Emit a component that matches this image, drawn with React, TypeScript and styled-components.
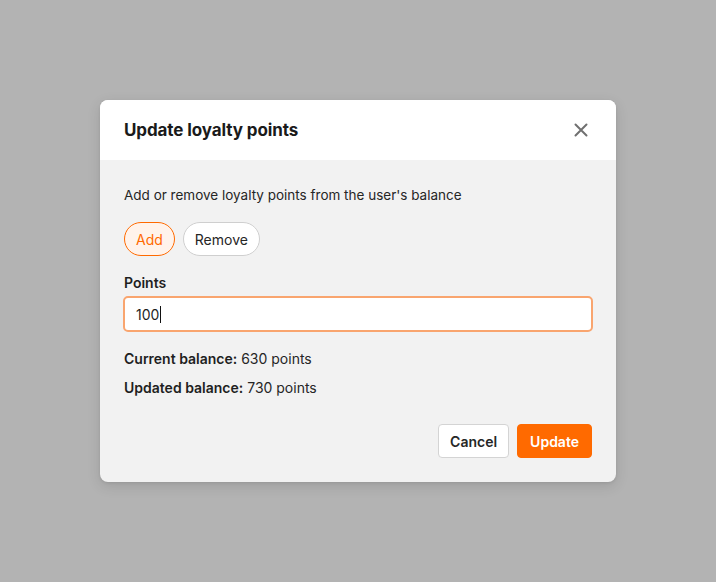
import styled, { createGlobalStyle } from "styled-components"

const GlobalStyle = createGlobalStyle`
html, body {
    margin: 0;
    padding: 0;
    background: #b3b3b3;
    font-family: Inter, "Noto Sans", "Liberation Sans", sans-serif;
    color: #1f1f1f;
}
* {
    box-sizing: border-box;
}
`

const Overlay = styled.div`
min-height: 100vh;
display: flex;
align-items: center;
justify-content: center;
`
const Modal = styled.div`
width: 516px;
background: #f2f2f2;
border-radius: 8px;
overflow: hidden;
box-shadow: 0 4px 14px rgba(0, 0, 0, 0.12), 0 1px 3px rgba(0, 0, 0, 0.08);
`
const Header = styled.div`
height: 60px;
padding: 0 24px;
background: #ffffff;
display: flex;
align-items: center;
justify-content: space-between;
`
const Title = styled.h2`
margin: 0;
font-size: 17px;
font-weight: 700;
letter-spacing: -0.1px;
color: #1a1a1a;
`
const CloseButton = styled.button`
width: 24px;
height: 24px;
margin-right: -1px;
padding: 0;
border: none;
background: none;
display: flex;
align-items: center;
justify-content: center;
cursor: pointer;
`
const Body = styled.div`
padding: 24px 24px 24px;
display: flex;
flex-direction: column;
`
const Description = styled.p`
margin: 0;
font-size: 13.5px;
line-height: 22px;
color: #262626;
`
const ToggleRow = styled.div`
margin-top: 16px;
display: flex;
gap: 8px;
`
const Pill = styled.button<{ $active?: boolean }>`
height: 34px;
padding: 0 11px;
border-radius: 17px;
font-family: inherit;
font-size: 14px;
border: 1px solid ${(p) => (p.$active ? "#ff6a00" : "#cfcfcf")};
background: ${(p) => (p.$active ? "#fff3eb" : "#ffffff")};
color: ${(p) => (p.$active ? "#ff6a00" : "#262626")};
cursor: pointer;
`
const Label = styled.label`
margin-top: 17px;
font-size: 14px;
line-height: 20px;
font-weight: 600;
color: #1f1f1f;
`
const InputBox = styled.div`
margin-top: 3px;
margin-left: -1px;
margin-right: -1px;
height: 36px;
padding: 0 11px;
background: #ffffff;
border: 2px solid #f9a56f;
border-radius: 5px;
display: flex;
align-items: center;
font-size: 14px;
color: #1f1f1f;
`
const Caret = styled.span`
display: inline-block;
width: 1px;
height: 17px;
margin-left: 1px;
background: #111111;
`
const BalanceLine = styled.div<{ $first?: boolean }>`
margin-top: ${(p) => (p.$first ? "17px" : "9px")};
font-size: 14px;
line-height: 20px;
color: #262626;
b {
    font-weight: 600;
    color: #1f1f1f;
}
`
const Footer = styled.div`
margin-top: 26px;
display: flex;
justify-content: flex-end;
gap: 8px;
`
const ActionButton = styled.button<{ $primary?: boolean }>`
height: 34px;
padding: 0 ${(p) => (p.$primary ? "12px" : "11px")};
border-radius: 4px;
font-family: inherit;
font-size: 14px;
font-weight: 600;
border: 1px solid ${(p) => (p.$primary ? "#ff6a00" : "#d4d4d4")};
background: ${(p) => (p.$primary ? "#ff6a00" : "#ffffff")};
color: ${(p) => (p.$primary ? "#ffffff" : "#262626")};
cursor: pointer;
`

const CloseIcon = () => (
    <svg width="14" height="14" viewBox="0 0 14 14">
        <path d="M1.5 1.5L12.5 12.5M12.5 1.5L1.5 12.5" stroke="#707070" strokeWidth="2" strokeLinecap="round" />
    </svg>
)

const App = () => {
    const current = 630
    const points = 100

    return (
        <>
            <GlobalStyle />
            <Overlay>
                <Modal>
                    <Header>
                        <Title>Update loyalty points</Title>
                        <CloseButton aria-label="Close">
                            <CloseIcon />
                        </CloseButton>
                    </Header>
                    <Body>
                        <Description>Add or remove loyalty points from the user's balance</Description>
                        <ToggleRow>
                            <Pill $active>Add</Pill>
                            <Pill>Remove</Pill>
                        </ToggleRow>
                        <Label>Points</Label>
                        <InputBox role="textbox">
                            {points}
                            <Caret />
                        </InputBox>
                        <BalanceLine $first>
                            <b>Current balance:</b> {current} points
                        </BalanceLine>
                        <BalanceLine>
                            <b>Updated balance:</b> {current + points} points
                        </BalanceLine>
                        <Footer>
                            <ActionButton>Cancel</ActionButton>
                            <ActionButton $primary>Update</ActionButton>
                        </Footer>
                    </Body>
                </Modal>
            </Overlay>
        </>
    )
}

export default App
